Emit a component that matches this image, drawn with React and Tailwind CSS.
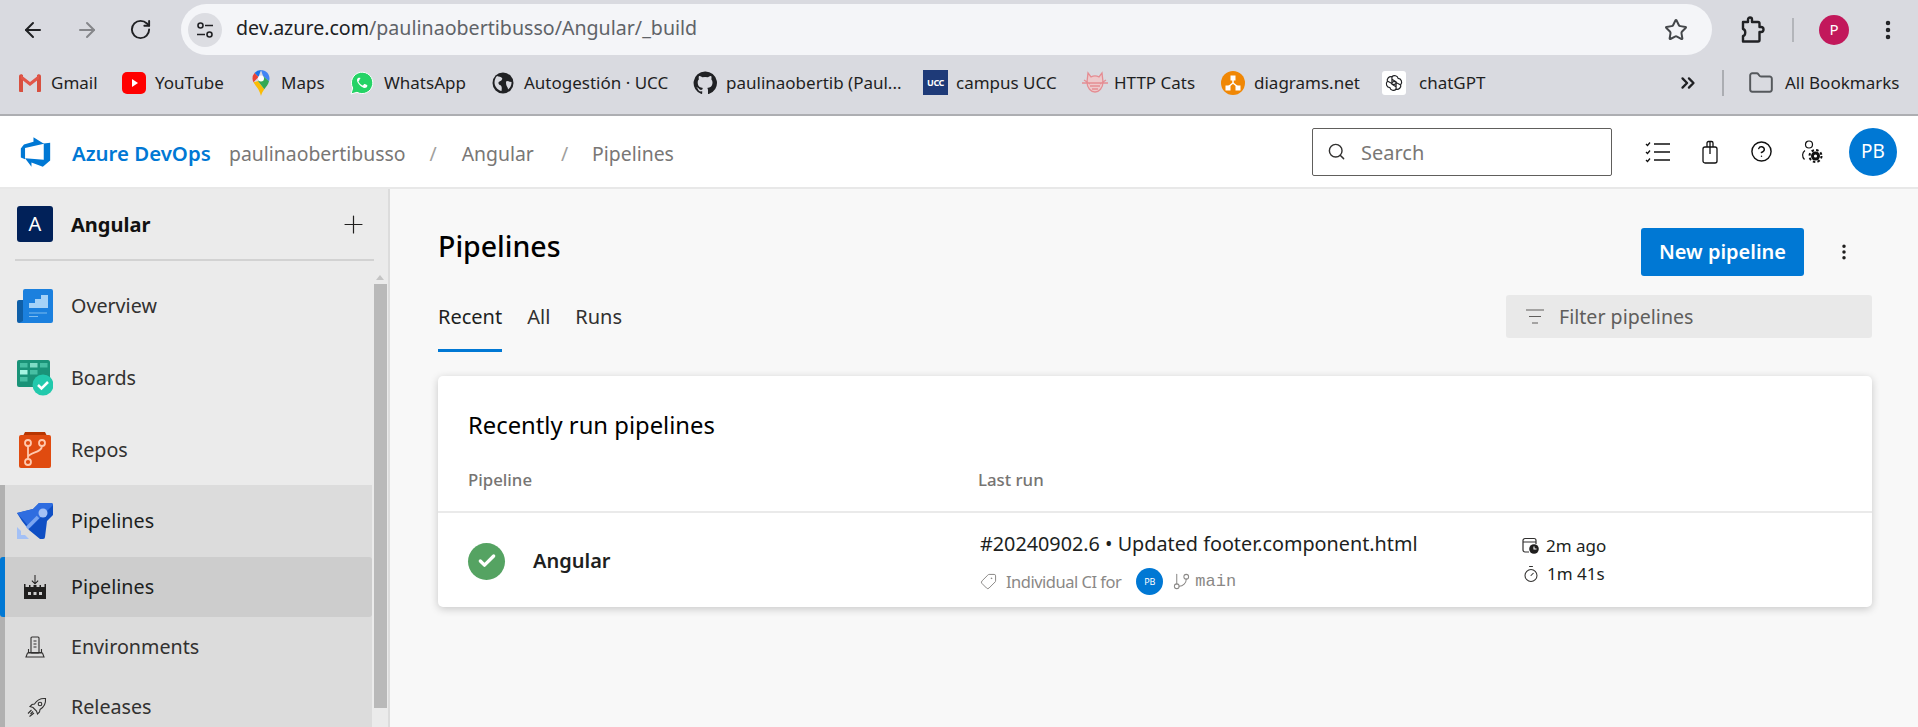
import React from 'react';
import { ArrowLeft, ArrowRight, RotateCw, Star, MoreVertical, ChevronsRight, Folder, Search, Plus, Tag, GitBranch, Check, HelpCircle, Timer } from 'lucide-react';

const font = "font-['Noto_Sans','Open_Sans',sans-serif]";

// Brand / favicon drawings
const GmailIcon = () => (
  <svg width="24" height="20" viewBox="0 0 24 20">
    <path d="M1 18V3l11 8 11-8v15h-4V8l-7 5-7-5v10z" fill="#d9dae0" />
    <path d="M1 19V3.500C1 1.500 3 .8 4.500 1.800L5 2.200V19H2a1 1 0 0 1-1-1z" fill="#d85040" />
    <path d="M23 19V3.500C23 1.500 21 .8 19.500 1.800L19 2.200V19h3a1 1 0 0 0 1-1z" fill="#d85040" />
    <path d="M3 2l9 7 9-7v4l-9 7-9-7z" fill="#e2574a" />
  </svg>
);

const YoutubeIcon = () => (
  <svg width="24" height="24" viewBox="0 0 24 24">
    <rect x="0" y="1" width="24" height="22" rx="5" fill="#f00" />
    <path d="M10 8l6 4-6 4z" fill="#fff" />
  </svg>
);

const MapsIcon = () => (
  <svg width="18" height="26" viewBox="0 0 18 26">
    <path d="M9 0a8.500 8.500 0 0 0-6.500 3l4 4z" fill="#1a73e8" />
    <path d="M9 0c4.700 0 8.500 3.800 8.500 8.500 0 1-.2 2-.5 2.800L11 6z" fill="#4285f4" />
    <path d="M2.500 3A8.500 8.500 0 0 0 .5 8.500c0 1.500.4 2.700 1 3.800L6.500 7z" fill="#ea4335" />
    <path d="M1.500 12.300C3 15.500 7 18 9 26c.7-3 2-5 3.300-6.800L6 11z" fill="#fbbc04" />
    <path d="M6 11l6.300 8.200c2-2.600 4-4.700 4.700-7.900L11 6z" fill="#34a853" />
    <circle cx="9" cy="8.500" r="3" fill="#fff" />
  </svg>
);

const WhatsappIcon = () => (
  <svg width="24" height="24" viewBox="0 0 24 24">
    <path d="M1 23l1.700-6A10.700 10.700 0 1 1 7 21.300z" fill="#25d366" stroke="#fff" strokeWidth="1" />
    <path d="M8.500 6.800c-.5 0-1.500 1-1.500 2.500s1.100 3.200 2.600 4.800c1.700 1.600 3.500 2.900 5.100 2.900 1.300 0 2.500-1 2.600-2 .1-.5 0-.8-.2-.9l-2.300-1.100c-.4-.1-.6 0-.8.300l-.8 1c-.2.200-.4.200-.7.100-1.700-.7-3-2-3.900-3.700-.1-.3 0-.5.200-.7l.6-.8c.2-.2.200-.4.100-.7L10.500 7.300c-.2-.4-.4-.5-.8-.5z" fill="#fff" />
  </svg>
);

const GlobeIcon = () => (
  <svg width="22" height="22" viewBox="0 0 22 22">
    <circle cx="11" cy="11" r="10.500" fill="#202124" />
    <path d="M5 4c2 1 4 .5 5 2s-1 3-2.500 3.500S6 12 8 13s2 3 1.500 6C7 18.500 3 16 2.500 11 2.500 8 3.500 5.500 5 4zM15 9c1.500 0 3 1 4.500 1 .3 3-1.500 6-3.500 7.500 0-2-1-2.500-1.500-4S13.500 9 15 9z" fill="#d9dae0" />
  </svg>
);

const GithubIcon = () => (
  <svg width="24" height="24" viewBox="0 0 24 24" fill="#202124">
    <path d="M12 .5a11.500 11.500 0 0 0-3.600 22.400c.6.100.8-.2.800-.6v-2c-3.200.7-3.900-1.500-3.900-1.500-.5-1.300-1.300-1.700-1.300-1.700-1-.7.100-.7.100-.7 1.200.1 1.800 1.200 1.800 1.200 1 1.800 2.700 1.300 3.400 1 .1-.8.400-1.300.7-1.600-2.600-.3-5.300-1.300-5.300-5.700 0-1.300.5-2.300 1.200-3.100-.1-.3-.5-1.500.1-3.100 0 0 1-.3 3.200 1.200a11 11 0 0 1 5.800 0c2.200-1.500 3.200-1.200 3.200-1.200.6 1.600.2 2.800.1 3.100.8.800 1.200 1.900 1.200 3.100 0 4.400-2.700 5.400-5.300 5.700.4.400.8 1.100.8 2.200v3.200c0 .3.200.7.800.6A11.500 11.500 0 0 0 12 .5z" />
  </svg>
);

const UccIcon = () => (
  <div className="w-[25px] h-[25px] bg-[#1e3a78] flex items-center justify-center text-white text-[9px] font-bold tracking-tighter">UCC</div>
);

const CatIcon = () => (
  <svg width="26" height="24" viewBox="0 0 26 24" fill="none" stroke="#e58d93" strokeWidth="1.300">
    <path d="M6 2l3 4a8 8 0 0 1 8 0l3-4 1 9c0 6-4 10-8 10S5 17 5 11z" fill="#edc9cb" />
    <path d="M0 12h26M2 9l6 4M24 9l-6 4M8 15h10M10 18h6" />
  </svg>
);

const DiagramsIcon = () => (
  <svg width="24" height="24" viewBox="0 0 24 24">
    <circle cx="12" cy="12" r="12" fill="#f08705" />
    <path d="M12 9v3M12 12l-5 4M12 12l5 4" stroke="#fff" strokeWidth="1.500" />
    <rect x="9.500" y="4.500" width="5" height="5" fill="#fff" />
    <rect x="4.500" y="14.500" width="5" height="5" fill="#fff" />
    <rect x="14.500" y="14.500" width="5" height="5" fill="#fff" />
  </svg>
);

const ChatIcon = () => (
  <div className="w-[24px] h-[24px] bg-white rounded-[3px] flex items-center justify-center">
    <svg width="20" height="20" viewBox="0 0 24 24" fill="none" stroke="#202124" strokeWidth="1.400">
      <path d="M9.500 4.500a4.500 4.500 0 0 1 7.500 2 4.500 4.500 0 0 1 3 7.500 4.500 4.500 0 0 1-5.500 5.500 4.500 4.500 0 0 1-7.500-2 4.500 4.500 0 0 1-3-7.500 4.500 4.500 0 0 1 5.500-5.500z" />
      <path d="M9.500 4.500v9l5 3M14.500 19.500v-9l-5-3M4 9.500l8 4.500 4-2.500M20 14.500l-8-4.500-4 2.500" />
    </svg>
  </div>
);

const ExtensionIcon = () => (
  <svg width="26" height="28" viewBox="0 0 26 28" fill="none" stroke="#202124" strokeWidth="2.400" strokeLinejoin="round">
    <path d="M3 6h5V3.500a2 2 0 0 1 4 0V6h6a1.500 1.500 0 0 1 1.500 1.500V11h1.500a2.500 2.500 0 0 1 0 5h-1.500v8a1.500 1.500 0 0 1-1.500 1.500H3V20c3-.5 3-6.500 0-7z" />
  </svg>
);

const AzureLogo = () => (
  <svg width="33" height="34" viewBox="0 0 18 18" fill="#0078d4">
    <path d="M17 4v9.700L13 17l-6.200-2.300V17l-3.500-4.600 10.200.8V4.400zm-3.400.5L7.900 1v2.400L2.700 4.900 1 7.100v4.900l2.300 1V6.800z" />
  </svg>
);

const OverviewIcon = () => (
  <svg width="36" height="34" viewBox="0 0 36 34">
    <rect x="0" y="11" width="12" height="23" rx="2" fill="#0f5fa8" />
    <path d="M6 2a2 2 0 0 1 2-2h26a2 2 0 0 1 2 2v30a2 2 0 0 1-2 2H2l4-2z" fill="#1b80de" />
    <path d="M12 14h6v-4h6V6h7v13H12z" fill="#a5d2f7" />
    <path d="M12 24h18M12 27.500h9" stroke="#7dbcf0" strokeWidth="1" />
  </svg>
);

const BoardsIcon = () => (
  <svg width="36" height="36" viewBox="0 0 36 36">
    <rect x="0" y="0" width="33" height="27" rx="2" fill="#1a9378" />
    <g fill="#47bfa3">
      <rect x="3" y="3" width="7.500" height="4.500" />
      <rect x="13" y="3" width="7.500" height="4.500" fill="#7fdcc6" />
      <rect x="23" y="3" width="7.500" height="4.500" />
      <rect x="3" y="10" width="7.500" height="4.500" fill="#a5f5e2" />
      <rect x="13" y="10" width="7.500" height="4.500" />
      <rect x="3" y="17" width="7.500" height="4.500" />
    </g>
    <circle cx="26" cy="25" r="10.500" fill="#22c9ac" />
    <path d="M21 25l3.500 3.500L31 22" stroke="#fff" strokeWidth="2.500" fill="none" />
  </svg>
);

const ReposIcon = () => (
  <svg width="34" height="36" viewBox="0 0 34 36" className="ml-[1px]">
    <path d="M7 0h20l2 4H5z" fill="#b83500" />
    <path d="M3 3h28a2 2 0 0 1 2 2v29a2 2 0 0 1-2 2H3a2 2 0 0 1-2-2V5a2 2 0 0 1 2-2z" fill="#e04b10" />
    <g fill="none" stroke="#ffc9ae" strokeWidth="1.800">
      <circle cx="10" cy="11" r="3" />
      <circle cx="24" cy="11" r="3" />
      <circle cx="10" cy="30" r="3" />
      <path d="M10 14v13M10 25c1-5 14-4 14-11" />
    </g>
  </svg>
);

const PipelinesIcon = () => (
  <svg width="36" height="36" viewBox="0 0 36 36">
    <path d="M0 10l16-4L22 0h12a2 2 0 0 1 2 2v10l-6 6-2 16a2 2 0 0 1-2 2h-3l-11-9-7-9z" fill="#0f4fc4" />
    <path d="M0 10l16-4L22 0h12a2 2 0 0 1 2 2L13 25 8 19z" fill="#2f6de0" />
    <circle cx="26" cy="10" r="4.500" fill="#a3c0f5" />
    <path d="M0 24v12h12l-4-4H4v-4z" fill="#a3c0f5" />
    <path d="M10 25l11-11" stroke="#7aa5f0" strokeWidth="3.500" />
  </svg>
);

const SubPipelinesIcon = () => (
  <svg width="22" height="24" viewBox="0 0 22 24" fill="#201f1e">
    <path d="M10.500 0h1v7.500l2.300-2.300.7.700-3.500 3.500-3.500-3.500.7-.7 2.300 2.300z" />
    <path fillRule="evenodd" d="M0 9h1.500v3H5v-2h1.500v2H9.500v-2h3v2h3v-2H17v2h3.500V9H22v15H0zM4 17v3h3v-3zm5.500 0v3h3v-3zm5.500 0v3h3v-3z" />
  </svg>
);

const EnvironmentsIcon = () => (
  <svg width="20" height="22" viewBox="0 0 20 22" fill="none" stroke="#323130" strokeWidth="1.100">
    <rect x="6" y="1" width="8" height="16" rx="1" />
    <path d="M8.500 5h3M8.500 8h3M8.500 11h3M3.500 13v3.500h13V13M1 21l1.500-4h15L19 21z" />
  </svg>
);

const ReleasesIcon = () => (
  <svg width="20" height="20" viewBox="0 0 20 20" fill="none" stroke="#323130" strokeWidth="1.100">
    <path d="M18.500 1.500c-5-.5-8.500 1.500-11 5.500l-2.500.5L3 9.500l3 1 3.500 3.500 1 3 2-2 .5-2.500c4-2.500 6-6 5.500-11z" />
    <circle cx="13" cy="7" r="1.800" />
    <path d="M4.500 13L1 16.500M6 14.500L3.500 17M7 16l-4.500 3.500" />
  </svg>
);

const WorkItemsIcon = () => (
  <svg width="26" height="22" viewBox="0 0 26 22" fill="none" stroke="#111" strokeWidth="1.300">
    <path d="M1 3l1.500 1.500L5 1.500M1 11l1.500 1.500L5 9.500M1 19l1.500 1.500L5 17.500" />
    <path d="M9 3h16M9 11h16M9 19h16" />
  </svg>
);

const RetentionIcon = () => (
  <svg width="16" height="24" viewBox="0 0 16 24" fill="none" stroke="#111" strokeWidth="1.300">
    <rect x="1" y="7" width="14" height="16" rx="2" />
    <path d="M5 7V3a1.500 1.500 0 0 1 1.500-1.500h3A1.500 1.500 0 0 1 11 3v4M8 1.500V14" />
  </svg>
);

const UserSettingsIcon = () => (
  <svg width="22" height="24" viewBox="0 0 22 24" fill="none" stroke="#111" strokeWidth="1.200">
    <circle cx="8" cy="4.500" r="3.500" />
    <path d="M4 10.500C1 12.500 .8 17 3.500 19.500" />
    <circle cx="14.500" cy="16" r="4.500" fill="#111" stroke="none" />
    <circle cx="14.500" cy="16" r="6" fill="none" stroke="#111" strokeWidth="2" strokeDasharray="2.500 2.200" />
    <circle cx="14.500" cy="16" r="1.600" fill="#fff" stroke="none" />
  </svg>
);

const FilterIcon = () => (
  <svg width="18" height="16" viewBox="0 0 18 16" stroke="#605e5c" strokeWidth="1.200">
    <path d="M0 1h18M3 7.500h12M6 14h6" />
  </svg>
);

const CalendarClockIcon = () => (
  <svg width="17" height="17" viewBox="0 0 17 17" fill="none" stroke="#323130" strokeWidth="1.200">
    <path d="M7 15H3a2 2 0 0 1-2-2V3.500a2 2 0 0 1 2-2h9a2 2 0 0 1 2 2V7M1 5h13" />
    <circle cx="12" cy="12" r="4.800" fill="#201f1e" stroke="none" />
    <path d="M12 9.500V12h2.500" stroke="#fff" strokeWidth="1.100" />
  </svg>
);

const Bookmark = ({ icon, label, className }) => (
  <div className={`flex items-center shrink-0 ${className}`}>
    {icon}
    <span className="text-[#1f1f1f] text-[17px] leading-none">{label}</span>
  </div>
);

const NavItem = ({ icon, label, className = '' }) => (
  <div className={`flex items-center h-[72px] ${className}`}>
    <div className="w-[71px] pl-[17px] shrink-0 flex items-center">{icon}</div>
    <span className="text-[19.7px] text-[#323130]">{label}</span>
  </div>
);

const App = () => {
  return (
    <div className={`w-[1918px] h-[727px] overflow-hidden flex flex-col bg-[#f8f8f8] ${font}`}>
      {/* Browser toolbar */}
      <div className="h-[58px] bg-[#d9dae0] flex items-center pt-[1px] shrink-0">
        <div className="w-[181px] flex items-center shrink-0 pl-[21px] gap-[30px]">
          <ArrowLeft className="w-[24px] h-[24px] text-[#202124]" strokeWidth={2} />
          <ArrowRight className="w-[24px] h-[24px] text-[#85868a]" strokeWidth={2} />
          <RotateCw className="w-[23px] h-[23px] text-[#202124]" strokeWidth={2} />
        </div>
        <div className="w-[1531px] h-[51px] bg-[#f4f5f8] rounded-full flex items-center pl-[7px] pr-[24px] shrink-0">
          <div className="w-[34px] h-[34px] rounded-full bg-[#dcdde2] flex items-center justify-center shrink-0">
            <svg width="18" height="18" viewBox="0 0 18 18" fill="none" stroke="#202124" strokeWidth="1.600">
              <circle cx="4.500" cy="4.500" r="2.500" /><path d="M9 4.500h8M1 13.500h8" /><circle cx="13.500" cy="13.500" r="2.500" />
            </svg>
          </div>
          <div className="ml-[14px] text-[19.6px] text-[#5f6368] flex-1 pb-[4px]">
            <span className="text-[#202124]">dev.azure.com</span>/paulinaobertibusso/Angular/_build
          </div>
          <Star className="w-[24px] h-[24px] text-[#44474a]" strokeWidth={2} />
        </div>
        <div className="flex items-center flex-1 pl-[28px]">
          <ExtensionIcon />
          <div className="w-[2px] h-[24px] bg-[#b3b5ba] ml-[26px]" />
          <div className="w-[30px] h-[30px] rounded-full bg-[#c2185b] text-white text-[15px] flex items-center justify-center ml-[25px]">P</div>
          <MoreVertical className="w-[24px] h-[24px] text-[#202124] ml-[27px]" strokeWidth={2.500} />
        </div>
      </div>

      {/* Bookmarks bar */}
      <div className="h-[58px] bg-[#d9dae0] border-b-[2px] border-[#adaeb2] flex items-center pl-[18px] pb-[7px] shrink-0">
        <Bookmark icon={<GmailIcon />} label="Gmail" className="w-[104px] gap-[9px]" />
        <Bookmark icon={<YoutubeIcon />} label="YouTube" className="w-[130px] gap-[9px]" />
        <Bookmark icon={<MapsIcon />} label="Maps" className="w-[98px] gap-[11px]" />
        <Bookmark icon={<WhatsappIcon />} label="WhatsApp" className="w-[142px] gap-[10px]" />
        <Bookmark icon={<GlobeIcon />} label="Autogestión · UCC" className="w-[201px] gap-[10px]" />
        <Bookmark icon={<GithubIcon />} label="paulinaobertib (Paul..." className="w-[230px] gap-[9px]" />
        <Bookmark icon={<UccIcon />} label="campus UCC" className="w-[159px] gap-[8px]" />
        <Bookmark icon={<CatIcon />} label="HTTP Cats" className="w-[139px] gap-[6px]" />
        <Bookmark icon={<DiagramsIcon />} label="diagrams.net" className="w-[161px] gap-[9px]" />
        <Bookmark icon={<ChatIcon />} label="chatGPT" className="w-[295px] gap-[13px]" />
        <ChevronsRight className="w-[22px] h-[22px] text-[#202124] shrink-0" strokeWidth={2.500} />
        <div className="w-[2px] h-[26px] bg-[#abadb2] ml-[23px] shrink-0" />
        <Folder className="w-[26px] h-[26px] text-[#55585c] ml-[24px] shrink-0" strokeWidth={1.800} />
        <span className="text-[#1f1f1f] text-[17px] ml-[11px] whitespace-nowrap">All Bookmarks</span>
      </div>

      {/* Azure DevOps header */}
      <div className="h-[73px] bg-white border-b-[2px] border-[#e8e8e8] flex items-center shrink-0">
        <div className="pl-[19px] w-[72px] shrink-0"><AzureLogo /></div>
        <div className="flex items-center pt-[4px] text-[19.4px]">
          <span className="text-[20.400px] font-semibold text-[#0078d4] w-[157px]">Azure DevOps</span>
          <span className="text-[#797775]">paulinaobertibusso</span>
          <span className="text-[#a19f9d] ml-[24px]">/</span>
          <span className="text-[#797775] ml-[25px]">Angular</span>
          <span className="text-[#a19f9d] ml-[27px]">/</span>
          <span className="text-[#797775] ml-[24px]">Pipelines</span>
        </div>
        <div className="ml-auto flex items-center pr-[21px]">
          <div className="w-[300px] h-[48px] border border-[#605e5c] rounded-[2px] flex items-center pl-[14px] gap-[15px]">
            <Search className="w-[19px] h-[19px] text-[#323130]" strokeWidth={1.800} />
            <span className="text-[20px] text-[#797775] pt-[3px]">Search</span>
          </div>
          <div className="ml-[33px] flex"><WorkItemsIcon /></div>
          <div className="ml-[31px] flex"><RetentionIcon /></div>
          <HelpCircle className="w-[23px] h-[23px] text-[#111] ml-[32px]" strokeWidth={1.500} />
          <div className="ml-[28px] flex"><UserSettingsIcon /></div>
          <div className="w-[48px] h-[48px] rounded-full bg-[#0078d4] text-white text-[19px] flex items-center justify-center ml-[26px]">PB</div>
        </div>
      </div>

      <div className="flex flex-1 min-h-0">
        {/* Sidebar */}
        <div className="w-[390px] shrink-0 bg-[#ebebeb] border-r-[2px] border-[#dcdcdc] flex flex-col relative overflow-hidden">
          <div className="h-[72px] mx-[15px] border-b-[2px] border-[#d2d2d2] flex items-center shrink-0 w-[359px] mb-[9px]">
            <div className="w-[36px] h-[36px] bg-[#012159] rounded-[3px] ml-[2px] text-white text-[20px] flex items-center justify-center">A</div>
            <span className="text-[20px] font-bold text-[#111] ml-[18px] pt-[2px]">Angular</span>
            <Plus className="w-[29px] h-[29px] text-[#201f1e] ml-auto mr-[6px]" strokeWidth={1} />
          </div>
          <NavItem icon={<OverviewIcon />} label="Overview" className="w-[372px] shrink-0" />
          <NavItem icon={<BoardsIcon />} label="Boards" className="w-[372px] shrink-0" />
          <NavItem icon={<ReposIcon />} label="Repos" className="w-[372px] shrink-0" />
          <div className="w-[372px] flex-1 bg-[#dcdcdc] border-l-[5px] border-[#b1b1b1] -mt-[1px]">
            <div className="-ml-[5px] flex items-center h-[72px]">
              <div className="w-[71px] pl-[17px] shrink-0 flex"><PipelinesIcon /></div>
              <span className="text-[19.7px] text-[#201f1e]">Pipelines</span>
            </div>
            <div className="-ml-[5px] h-[60px] flex items-center bg-[#cdcdcd] border-l-[5px] border-[#0078d4] rounded-[3px]">
              <div className="w-[66px] pl-[19px] shrink-0 flex"><SubPipelinesIcon /></div>
              <span className="text-[19.7px] text-[#201f1e]">Pipelines</span>
            </div>
            <div className="-ml-[5px] h-[60px] flex items-center">
              <div className="w-[71px] pl-[25px] shrink-0 flex"><EnvironmentsIcon /></div>
              <span className="text-[19.7px] text-[#323130]">Environments</span>
            </div>
            <div className="-ml-[5px] h-[60px] flex items-center">
              <div className="w-[71px] pl-[27px] shrink-0 flex"><ReleasesIcon /></div>
              <span className="text-[19.7px] text-[#323130]">Releases</span>
            </div>
          </div>
          {/* scrollbar */}
          <div className="absolute left-[374px] top-[95px] w-[13px] h-[424px] bg-[#b9b9b9]" />
          <div className="absolute left-[376px] top-[86px] w-0 h-0 border-x-[4px] border-x-transparent border-b-[5px] border-b-[#c4c4c4]" />
        </div>

        {/* Main content */}
        <div className="flex-1 pl-[48px] pr-[46px] pt-[39px] min-w-0">
          <div className="flex items-center h-[48px]">
            <h1 className="text-[28.500px] font-medium text-black mb-[12px]">Pipelines</h1>
            <button className="ml-auto w-[163px] h-[48px] bg-[#0078d4] text-white text-[20px] font-semibold rounded-[3px]">New pipeline</button>
            <div className="w-[68px] flex pl-[30px]">
              <MoreVertical className="w-[20px] h-[20px] text-[#201f1e]" strokeWidth={2.200} />
            </div>
          </div>
          <div className="flex items-start mt-[19px] h-[57px]">
            <div className="h-[57px] border-b-[3px] border-[#0078d4] pt-[8px] text-[20px] leading-[28px] text-[#201f1e]">Recent</div>
            <div className="ml-[25px] pt-[8px] text-[20px] leading-[28px] text-[#323130]">All</div>
            <div className="ml-[25px] pt-[8px] text-[20px] leading-[28px] text-[#323130]">Runs</div>
            <div className="ml-auto w-[366px] h-[43px] bg-[#e9e9e9] rounded-[3px] flex items-center pl-[20px] gap-[15px]">
              <FilterIcon />
              <span className="text-[19.600px] text-[#605e5c]">Filter pipelines</span>
            </div>
          </div>

          <div className="mt-[24px] h-[231px] bg-white rounded-[5px] shadow-[0_2px_8px_rgba(0,0,0,0.2)]">
            <div className="h-[137px] border-b-[2px] border-[#eaeaea] px-[30px] flex flex-col">
              <div className="text-[23.800px] text-black mt-[31px] leading-[36px]">Recently run pipelines</div>
              <div className="flex mt-[25px] text-[16.800px] font-medium text-[#767472] leading-[24px]">
                <span className="w-[510px]">Pipeline</span>
                <span>Last run</span>
              </div>
            </div>
            <div className="flex items-center h-[94px] pl-[30px] pt-[2px]">
              <div className="w-[37px] h-[37px] rounded-full bg-[#55a362] flex items-center justify-center shrink-0">
                <Check className="w-[20px] h-[20px] text-white" strokeWidth={4} />
              </div>
              <span className="text-[20px] font-semibold text-[#201f1e] ml-[28px] w-[447px]">Angular</span>
              <div className="w-[542px] flex flex-col gap-[10px] pt-[3px]">
                <div className="text-[19.800px] leading-[28px] text-[#201f1e]">#20240902.6 • Updated footer.component.html</div>
                <div className="flex items-center text-[16.500px] tracking-[-0.5px] leading-[24px] text-[#8a8886]">
                  <Tag className="w-[17px] h-[17px] text-[#8a8886] mr-[9px] -scale-x-100" strokeWidth={1.400} />
                  <span>Individual CI for</span>
                  <div className="w-[27px] h-[27px] rounded-full bg-[#0078d4] text-white text-[9px] tracking-normal flex items-center justify-center ml-[15px]">PB</div>
                  <GitBranch className="w-[19px] h-[19px] text-[#8a8886] ml-[9px]" strokeWidth={1.300} />
                  <span className="ml-[4px] font-['Liberation_Mono',monospace] text-[17px] tracking-normal">main</span>
                </div>
              </div>
              <div className="flex flex-col gap-[4px] text-[17px] leading-[24px] text-[#201f1e] mb-[3px]">
                <div className="flex items-center gap-[7px]">
                  <CalendarClockIcon />
                  <span>2m ago</span>
                </div>
                <div className="flex items-center gap-[7px]">
                  <Timer className="w-[18px] h-[18px] text-[#323130]" strokeWidth={1.400} />
                  <span>1m 41s</span>
                </div>
              </div>
            </div>
          </div>
        </div>
      </div>
    </div>
  );
};

export default App;
